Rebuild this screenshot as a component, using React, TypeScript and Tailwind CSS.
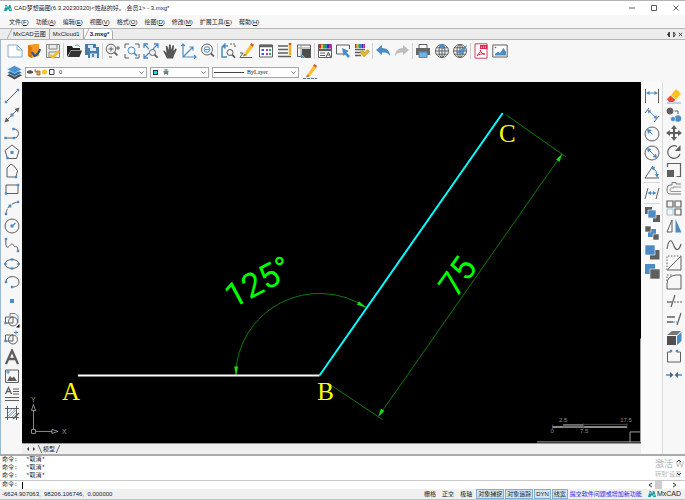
import type { ReactNode } from 'react';

type Tool = { name: string; art: ReactNode } | null;

const G = '#5f5f5f';
const B = '#4c8cc4';

const dot = (x: number, y: number, r = 1.2) => (
  <rect x={x - r} y={y - r} width={r * 2} height={r * 2} fill={B} stroke="none" />
);

const lens = (x: number, y: number, r: number) => (
  <>
    <circle cx={x} cy={y} r={r} />
    <path d={`M${x + r * 0.7} ${y + r * 0.7} l3 3`} strokeWidth="1.8" />
  </>
);

const pencil = (
  <>
    <path d="M5 11 L11 2 L14 4 L8 12 L4.500 13Z" fill="#fbc02d" stroke="none" />
    <path d="M11 2 L12.500 0 L15 1.800 L14 4Z" fill="#e4572e" stroke="none" />
    <path d="M5 11 L8 12 L4 13.500Z" fill="#8b6b3e" stroke="none" />
  </>
);

const rainbow = (x: number, y: number, w: number) => (
  <g stroke="none">
    {['#d22', '#e8c21a', '#2bab3b', '#28b', '#42b', '#c2a'].map((c, i) => (
      <rect key={c} x={x + (i * w) / 6} y={y} width={w / 6} height="4" fill={c} />
    ))}
  </g>
);

const globe = (
  <>
    <circle cx="8" cy="8" r="6.500" />
    <ellipse cx="8" cy="8" rx="3" ry="6.500" />
    <path d="M8 1.500 V14.500 M1.500 8 H14.500 M2.500 4.800 H13.500 M2.500 11.200 H13.500" />
  </>
);

const mainTools: Tool[] = [
  { name: '新建', art: <path d="M1 2 H10 L15 7 V14 H1Z M10 2 V7 H15" fill="#fff" stroke="#86aed2" /> },
  {
    name: '打开云图',
    art: (
      <>
        <path d="M2 2 L9 1 H13 V13 L5 15 L2 13Z" fill="#f49a20" stroke="none" />
        <path d="M2 2 L6 4 V15 L2 13Z" fill="#d97a0c" stroke="none" />
        <path d="M6 9 L8.500 13 C11 12 13 10 14 6" stroke="#28549a" strokeWidth="2.200" />
      </>
    ),
  },
  {
    name: '保存云图',
    art: (
      <>
        <path d="M1.500 1.500 H14.500 V14.500 H1.500Z" fill="#e9e9e9" stroke="#888" />
        <path d="M4 1.500 V6 H12 V1.500 M4 14 V9 H12" stroke="#888" />
        <path d="M5 12 L8 14 L14 8" stroke="#f3bd26" strokeWidth="2.600" />
      </>
    ),
  },
  null,
  {
    name: '打开',
    art: (
      <>
        <path d="M1 14 V3 H6 L7 5 H14 V7 H5 L1 14Z" fill="#222" stroke="none" />
        <path d="M2 14 L5 7.500 H16 L13.500 14Z" fill="#333" stroke="none" />
        <path d="M9 3 C11 1 13 2 13.500 4" stroke="#38a169" />
      </>
    ),
  },
  {
    name: '保存',
    art: (
      <>
        <path d="M1 1 H12 V4 H15 V15 H4 V12 H1Z" fill="#477cab" stroke="none" />
        <path d="M4 2 H9 V5 H4Z M6 5 H12 V8 H6Z M6 10.500 H13 V15 H6Z" fill="#dcebf7" stroke="none" />
        <path d="M9 11 V14" stroke="#315f8b" strokeWidth="1.500" />
      </>
    ),
  },
  null,
  {
    name: '实时缩放',
    art: (
      <>
        {lens(6, 6, 4.8)}
        <path d="M3.500 6 H8.500 M6 3.500 V8.500 M11 5 H15 M13 3 V7 M4 14 H7" stroke={G} />
      </>
    ),
  },
  {
    name: '窗口缩放',
    art: (
      <>
        <path d="M1 5 V1 H5 M11 1 H15 V5 M15 11 V15 H11 M5 15 H1 V11" />
        <g stroke={B}>{lens(7.5, 7.5, 3.5)}</g>
      </>
    ),
  },
  {
    name: '范围缩放',
    art: (
      <>
        <path d="M6 6 L1.500 1.500 M1 5 V1 H5 M10 6 L14.500 1.500 M11 1 H15 V5 M6 10 L1.500 14.500 M1 11 V15 H5" stroke={B} strokeWidth="1.300" />
        {lens(9.5, 9.5, 3)}
      </>
    ),
  },
  {
    name: '平移',
    art: (
      <path
        d="M4.500 14.500 L1.500 8.500 Q1 7 2.400 7.500 L4.500 10 L3.800 3.500 Q4.500 2 5.500 3.500 L6.500 7 L7 1.800 Q8 .5 8.800 1.800 L9 7 L10.500 2.500 Q11.700 1.500 12 3 L11.500 8 L13.500 5.500 Q15 5 14.500 7 L12 12.500 L11 15.500 H5Z"
        fill="#575757"
        stroke="none"
      />
    ),
  },
  { name: '坐标系', art: <path d="M2 1 V14 H15 M0 3 L2 1 L4 3 M13 12 L15 14 L13 16 M2 14 L12 4 M8.500 4 H12 V7.500" stroke={B} strokeWidth="1.200" /> },
  {
    name: '比例缩放',
    art: (
      <>
        {lens(7, 6.500, 5.5)}
        <circle cx="7" cy="6.500" r="2.800" stroke={B} />
        <path d="M5 6.500 H9" stroke={B} />
      </>
    ),
  },
  null,
  {
    name: '上一视图',
    art: (
      <>
        <path d="M8 3 H3.500 Q2 3 2 5 V14 H7 M5.500 0.500 L3 3 L5.500 5.500" stroke={B} strokeWidth="1.500" />
        <path d="M10 1 H15 V5" strokeDasharray="2 1" />
        {lens(10, 9.500, 3)}
      </>
    ),
  },
  {
    name: '画笔',
    art: (
      <>
        {pencil}
        <path d="M1 10 H4 L1 14.500 H13" />
      </>
    ),
  },
  {
    name: '特性',
    art: (
      <>
        <path d="M1.500 2 H14.500 V14 H1.500Z" fill="#fff" />
        <path d="M1.500 3 H14.500" strokeWidth="2.500" />
        <path d="M3.500 7 H6 M3.500 11 H6" stroke="#3c5bd2" strokeWidth="2" />
        <path d="M8 7 H10 M8 11 H10" stroke="#cc31c8" strokeWidth="2" />
        <path d="M11 7 H13 M11 11 H13" stroke="#28ad68" strokeWidth="2" />
      </>
    ),
  },
  {
    name: '线型',
    art: (
      <>
        <path d="M1 3 H11 M1 6.500 H11 M1 10 H11 M1 13.500 H14" strokeWidth="1.700" />
        <path d="M13 1 V12" stroke="#f5ad24" strokeWidth="2.500" />
        <path d="M13 0 V2" stroke="#d9482b" strokeWidth="2.500" />
      </>
    ),
  },
  {
    name: '图块',
    art: (
      <>
        <path d="M1.500 2 H14.500 V14.500 H9 M1.500 2 V13.500 H5" />
        <path d="M1.500 5 H14 M5 2 V14" stroke="#999" />
        <path d="M6 6 H14.500 V14.500 H9 L6 11.500Z" fill="#4d4d4d" stroke="none" />
        <path d="M5 15 V11 L9 15Z" fill={B} stroke="none" />
      </>
    ),
  },
  null,
  {
    name: '文字样式',
    art: (
      <>
        <path d="M1.500 1.500 H14.500 V14.500 H1.500Z" fill="#fff" />
        {rainbow(2, 1.500, 12)}
        <path d="M1 7 H15" strokeWidth="2.200" />
        <path d="M3 10 H8 M3 12.500 H8 M9 14 L11.500 9 L13.500 14 M10 12 H13" />
      </>
    ),
  },
  {
    name: '选择',
    art: (
      <>
        <path d="M8 11 H1.500 V2 H14.500 V6" />
        <path d="M7 5 L14 8 L11.500 9.500 L15 13 L13 15 L10 11.500 L8.500 13Z" fill={B} stroke="none" />
      </>
    ),
  },
  {
    name: '格式刷',
    art: (
      <>
        {rainbow(1, 1, 10)}
        <path d="M1 6.500 H11 M1 9.500 H7 M1 12.500 H7" strokeWidth="1.700" />
        <path d="M6 9 L10 14 L15.500 8.500 L13.500 6.500 L10.500 9.500 L8.500 7.500Z" fill="#e9b523" stroke="#b98d1c" strokeWidth=".5" />
      </>
    ),
  },
  null,
  { name: '撤销', art: <path d="M1 7 L7 2 V5 C12 5 15 8 15 13 C13 10 11 9 7 9.500 V12Z" fill="#4c8cc4" stroke="none" /> },
  { name: '重做', art: <path d="M15 7 L9 2 V5 C4 5 1 8 1 13 C3 10 5 9 9 9.500 V12Z" fill="#bdbdbd" stroke="none" /> },
  null,
  {
    name: '打印',
    art: (
      <>
        <path d="M4 5 V1.500 H12 V5" fill="#fff" />
        <path d="M1 5 H15 V12 H12 V9 H4 V12 H1Z" fill="#666" stroke="none" />
        <path d="M4 9 H12 V14.500 H4Z" fill="#79afda" stroke={B} />
      </>
    ),
  },
  { name: '网络', art: <>{globe}<path d="M5 2 Q8 0 11 3 L10 6 L6 5Z" fill={B} stroke="none" /></> },
  { name: '网络发布', art: <>{globe}<path d="M4 10 L15 2 L11 12 L8 10Z" fill={B} stroke="none" opacity=".9" /></> },
  null,
  {
    name: '导出PDF',
    art: (
      <>
        <path d="M2 .8 H14 V15.200 H2Z" fill="#fff" stroke="#d8405d" />
        <path d="M7 2 H14.500 V6 H7Z" fill="#d22b4e" stroke="none" />
        <path d="M8.500 3.500 V5 M10.500 3.500 V5 M12.500 3.500 V5" stroke="#fff" strokeWidth=".7" />
        <path d="M4 12.500 C6 11 7.500 9 7.500 7 C7.500 9 9 11.500 12 11 C9 10.500 6 11.500 4 12.500" stroke="#d22b4e" />
      </>
    ),
  },
  {
    name: '导出图片',
    art: (
      <>
        <path d="M.8 2 H15.200 V14 H.8Z" fill="#fff" />
        <path d="M3 12.500 V11 L6 8.500 L8 10 L11.500 5 L14 9 V12.500Z" fill={B} stroke="none" />
        <circle cx="3.500" cy="4.500" r=".8" fill={G} stroke="none" />
      </>
    ),
  },
];

const drawTools: Tool[] = [
  { name: '直线', art: <><path d="M2 14 L14 2" />{dot(2, 14)}{dot(14, 2)}</> },
  { name: '构造线', art: <><path d="M2 14 L14 2" /><path d="M0.500 15.500 L2 10.500 L5.500 14Z M15.500 .5 L10.500 2 L14 5.500Z" fill={G} stroke="none" />{dot(8, 8, 1.5)}</> },
  { name: '多段线', art: <><path d="M1 13 H10 A4.500 4.500 0 0 0 10 4" />{dot(1.500, 13)}{dot(9.500, 4)}{dot(10, 13)}</> },
  { name: '多边形', art: <><path d="M8 1 L15 6.500 L12.500 14.500 H3.500 L1 6.500Z" />{dot(8, 8.500, 1.5)}{dot(3.500, 14)}</> },
  { name: '闭合线', art: <><path d="M3 14 V5 L7 1 L11 4 L13.500 8 L12 14Z" />{dot(12, 14)}</> },
  { name: '矩形', art: <><path d="M2 4 H14 V12.500 H2Z" />{dot(14, 4)}{dot(2, 12.500)}</> },
  { name: '圆弧', art: <><path d="M2 14 Q3 4 14 2" strokeDasharray="5 1" />{dot(2, 14)}{dot(6, 6, 1.4)}{dot(14, 2)}</> },
  { name: '圆', art: <><circle cx="8" cy="8" r="7" /><path d="M8 8 L11.500 5" stroke={B} strokeWidth="1.300" />{dot(8, 8, 1.5)}</> },
  { name: '样条曲线', art: <><path d="M2 2 C1 12 4 11 6 8.500 C8 6 9 7 10 9 C11 10.500 14 8 14 14" />{dot(2, 2)}{dot(14, 14)}</> },
  { name: '椭圆', art: <><ellipse cx="8" cy="8" rx="7" ry="4.500" />{dot(1.500, 8)}{dot(14.500, 8)}{dot(8, 3.500)}{dot(8, 12.500)}</> },
  { name: '椭圆弧', art: <><path d="M2 7 C4 0 15 2 15 8 C15 12 11 13 8 13" />{dot(2, 8)}{dot(8, 13)}</> },
  { name: '点', art: dot(8, 8, 2) },
  { name: '插入块', art: <><path d="M6 4 V1.500 H11 L14 4.500 V11" stroke={B} /><path d="M1.500 5 H9 V11 H1.500Z" /><circle cx="9" cy="9.500" r="4.500" /><path d="M15.500 12 V15.500 H12Z" fill="#000" stroke="none" />{dot(1.500, 11)}</> },
  { name: '创建块', art: <><path d="M1.500 5 H9 V11 H1.500Z" /><circle cx="9" cy="9.500" r="4.500" /><path d="M10 2.500 H14 M12 .5 V4.500" stroke={B} />{dot(1.500, 11)}</> },
  { name: '文字', art: <path d="M2 15 L8 1.500 L14 15 M4.500 10 H11.500" strokeWidth="2.300" /> },
  { name: '图片', art: <><path d="M1.500 2 H14.500 V14.500 H1.500Z" /><path d="M3 13 L6 8 L8 10 L10 8.500 L13 13Z" fill={G} stroke="none" /><path d="M2 4 H6 M4 2 V6" stroke={B} /></> },
  { name: '多行文字', art: <><path d="M1.500 8 L4.500 1.500 L7.500 8 M2.700 5.500 H6.300" strokeWidth="1.300" /><path d="M9 3 H15 M9 5.500 H15 M9 8 H15 M1 11.500 H15 M1 14.500 H15" /></> },
  { name: '填充', art: <><path d="M3.500 1 V15 M12.500 1 V15 M1 3.500 H15 M1 12.500 H15" /><path d="M4 8 L8 4 M4 11 L11 4 M5 12 L12 5 M8 12 L12 8" stroke={B} strokeWidth=".7" /><path d="M15 8 L9 14" strokeWidth="1.500" /></> },
];

const dimTools: Tool[] = [
  { name: '线性标注', art: <><path d="M1.500 1 V15 M14.500 1 V15" /><path d="M4 5 H12" stroke={B} /><path d="M2 5 L5.500 3 V7Z M14 5 L10.500 3 V7Z" fill={B} stroke="none" /></> },
  { name: '对齐标注', art: <><path d="M1 6 L5 1 M10 15 L15 9" /><path d="M5 4 L12 11" stroke={B} /><path d="M3.500 3 L7.500 3.500 L4.500 6.500Z M13 12 L12.500 8 L9.500 11Z" fill={B} stroke="none" /></> },
  { name: '半径标注', art: <><circle cx="8" cy="8" r="7" /><path d="M8.500 8.500 L5 5" stroke={B} /><path d="M3 3 L8 4 L4 8Z" fill={B} stroke="none" /></> },
  { name: '直径标注', art: <><circle cx="8" cy="8" r="7" /><path d="M5 5 L11 11" stroke={B} /><path d="M3 3 L7.500 4 L4 7.500Z M13 13 L12 8.500 L8.500 12Z" fill={B} stroke="none" /></> },
  { name: '角度标注', art: <><path d="M15 14 H1 L9 2" /><path d="M9 4 Q13 6 13 12" stroke={B} /><path d="M6.500 4 L11 2.500 L10 6.500Z M13 14 L11 10 H15Z" fill={B} stroke="none" /></> },
  null,
  { name: '连续标注', art: <><path d="M1 14 L4 3 M12 14 L15 3" /><path d="M5 8 H11" stroke={B} /><path d="M3.500 8 L7 6 V10Z M12.500 8 L9 6 V10Z" fill={B} stroke="none" /></> },
  null,
  { name: '前置', art: <g stroke="none"><path d="M1 1 H8 V8 H1Z M9 9 H16 V16 H9Z" fill={G} /><path d="M4 4 H12 V12 H4Z" fill={B} stroke="#fff" strokeWidth=".6" /></g> },
  { name: '后置', art: <g stroke="none"><path d="M4 4 H12 V12 H4Z" fill={B} /><path d="M1 1 H7 V7 H1Z M9 9 H15 V15 H9Z" fill={G} stroke="#fff" strokeWidth=".6" /></g> },
  { name: '置于对象之上', art: <><path d="M6 6 H15.500 V15.500 H6Z" fill={G} stroke="none" /><path d="M1 1 H11 V11 H1Z" fill={B} stroke="#fff" strokeWidth=".6" /></> },
  { name: '置于对象之下', art: <><path d="M1 1 H11 V11 H1Z" fill={B} stroke="none" /><path d="M6 6 H16 V16 H6Z" fill={G} stroke="#fff" strokeWidth=".6" /></> },
];

const editTools: Tool[] = [
  { name: '删除', art: <><path d="M5 7 L10 1 L15 5.500 L10 11.500Z" fill="#fcc419" stroke="none" /><path d="M1 11 L4.500 7.500 L9.500 12 L7 14 H3Z" fill="#e8502a" stroke="none" /><path d="M1 15 H15" stroke={B} strokeWidth=".7" /></> },
  { name: '复制', art: <><circle cx="4" cy="4" r="3" fill={G} /><path d="M8.500 4 H12 V7" /><circle cx="12" cy="11.500" r="3.200" fill={B} stroke="none" /><circle cx="7" cy="12" r="2.500" fill={B} stroke="#fff" strokeWidth=".6" /></> },
  { name: '移动', art: <><path d="M8 2 V14 M2 8 H14" strokeWidth="2" /><path d="M8 0 L11 4 H5Z M8 16 L11 12 H5Z M0 8 L4 5 V11Z M16 8 L12 5 V11Z" fill={G} stroke="none" /></> },
  { name: '旋转', art: <><path d="M11 2.500 A6.300 6.300 0 1 0 14 10" strokeWidth="1.200" /><path d="M14.500 1 V7 H9Z" fill={G} stroke="none" /></> },
  { name: '缩放', art: <><path d="M1 8 H8 V15 H1Z" fill={G} stroke="none" /><path d="M1.500 5 V1.500 H14.500 V14.500 H10.500" strokeWidth="1.200" /></> },
  { name: '偏移', art: <><path d="M15 3 H10 V1.500 H6 V4 H4 Q1 4 1 8 Q1 13 4 13 H15" stroke="#777" /><path d="M15 6 H9 V5 M8 5 V7 H5 Q4 7 4 9 Q4 10.500 5 10.500 H15" stroke="#999" /></> },
  { name: '阵列', art: <><path d="M1 1 H7 V7 H1Z M9 1 H15 V7 H9Z M9 9 H15 V15 H9Z" strokeWidth="1.200" /><path d="M1 9 H7 V15 H1Z" stroke="#9dbdd8" /></> },
  { name: '镜像', art: <><path d="M6 2 V14 H1Z" /><path d="M9.500 1 V14.500 H15.500Z" fill={B} stroke="none" /></> },
  { name: '曲线编辑', art: <path d="M1 12 C3 0 6 3 8 9 C10 14 13 14 15 7" strokeWidth="1.200" /> },
  { name: '倒角', art: <><path d="M1 15 H15 V1" /><path d="M1 15 V1 H15" strokeDasharray="1.500 1.500" /><path d="M1.500 14.500 L14.500 1.500" /></> },
  { name: '圆角', art: <><path d="M1 10 V15 H15 V1 H10 Q1 2 1 10" /><path d="M1 7 V1 H7" strokeDasharray="1.500 1.500" /></> },
  { name: '修剪', art: <><path d="M1 9 H6" strokeWidth="1.300" /><path d="M8 9 H16" strokeDasharray="2 1" /><path d="M9 2 L5 14" strokeWidth="1.200" /></> },
  { name: '延伸', art: <><path d="M1 6 H9 M1 11 H7" strokeWidth="1.300" /><path d="M7 11 H11" stroke={B} strokeDasharray="2 1" /><path d="M15 2 L11 14" strokeWidth="1.200" /></> },
  { name: '拉伸', art: <g stroke="none"><path d="M1 6 H10 V15 H1Z" fill="#505050" /><path d="M1 5 L6 1 H15 L11 5Z" fill="#777" /><path d="M11 6 L15.500 2 V11 L11 15Z" fill={B} /></g> },
  { name: '打断', art: <><path d="M5 4 H1.500 V14 H14.500 V4 H11" />{dot(5, 3)}{dot(11, 3)}</> },
  { name: '合并', art: <><path d="M0 8 H5 M16 8 H11" stroke={B} strokeWidth="1.300" /><path d="M7.500 8 L4 5 V11Z M8.500 8 L12 5 V11Z" fill="#426a8d" stroke="none" /></> },
];

const menus = [
  ['文件', 'F'],
  ['功能', 'A'],
  ['编辑', 'E'],
  ['视图', 'V'],
  ['格式', 'O'],
  ['绘图', 'D'],
  ['修改', 'M'],
  ['扩展工具', 'E'],
  ['帮助', 'H'],
];

function ToolButtons({ tools, vertical }: { tools: Tool[]; vertical?: boolean }) {
  return (
    <>
      {tools.map((tool, i) =>
        tool ? (
          <button key={i} type="button" aria-label={tool.name} title={tool.name} className="size-4 shrink-0 hover:bg-sky-100">
            <svg viewBox="0 0 16 16" className="size-4" fill="none" stroke={G} strokeWidth="1">
              {tool.art}
            </svg>
          </button>
        ) : (
          <span key={i} className={vertical ? '-my-px h-px w-4 bg-[#d8d8d8]' : '-mx-px h-4 w-px bg-[#d0d0d0]'} />
        )
      )}
    </>
  );
}

function Combo({ label, value, width, children }: { label: string; value: string; width: string; children: ReactNode }) {
  return (
    <div className={`flex h-[11px] items-center border border-[#a8a8a8] bg-white font-['Liberation_Serif','Noto_Sans_CJK_SC',serif] ${width}`}>
      {children}
      <select aria-label={label} className="min-w-0 flex-1 appearance-none bg-transparent text-[6px] leading-[8px] outline-none">
        <option>{value}</option>
      </select>
      <svg viewBox="0 0 7 7" className="pointer-events-none mr-px size-[7px] shrink-0" fill="none" stroke="#555">
        <path d="M1.500 2.500 L3.500 4.500 L5.500 2.500" strokeWidth=".8" />
      </svg>
    </div>
  );
}

function Logo() {
  return (
    <svg viewBox="0 0 8 8" className="size-2 shrink-0">
      <path d="M0 7 L1.500 1 H3 L4 4 L5 1 H6.500 L8 7 H5.500 L4 5 L2.500 7Z" fill="#159c9c" />
      <path d="M1 3 H3 M5 5 H7" stroke="#fff" strokeWidth=".7" />
    </svg>
  );
}

function Drawing() {
  return (
    <svg viewBox="22 82 620 361" preserveAspectRatio="xMinYMin meet" className="block h-full w-full" role="img" aria-label="图纸">
      <g stroke="#0a9a0a" strokeWidth=".8" fill="none">
        <path d="M236 376 A84 83 0 0 1 367 308" />
        <path d="M507 115 L567 157 M329 384 L383 420 M563 154 L379 417" />
      </g>
      <g fill="#18e018">
        <path d="M236.500 376 L234.500 367 H238.500Z" />
        <path d="M367 308 L357.500 305 L359.500 301.500Z" />
        <path d="M563 154 L560.500 162 L557 159.500Z" />
        <path d="M379 417 L381.500 409 L385 411.500Z" />
      </g>
      <path d="M78 376 H320" stroke="#fff" strokeWidth="2" />
      <path d="M320 376 L503.500 113" stroke="#00ffff" strokeWidth="2" />
      <g fill="#00ff00" fontFamily="Roboto, sans-serif" fontSize="34">
        <text transform="translate(233 309) rotate(-28)">125°</text>
        <text transform="translate(457 299) rotate(-55)">75</text>
      </g>
      <g fill="#ffff00" fontFamily="'Liberation Serif', serif" fontSize="25" textAnchor="middle">
        <text x="71" y="401">A</text>
        <text x="326" y="401">B</text>
        <text x="508" y="142">C</text>
      </g>
      <g stroke="#b0b0b0" strokeWidth=".8" fill="none">
        <path d="M31.500 430 H35.500 V434 H31.500Z M33.500 430 V411 M35.500 432 H52" />
        <path d="M33.500 405 L35.500 411 H31.500Z M58 432 L52 430 V434Z" />
      </g>
      <g fill="#9a9a9a" fontFamily="'Liberation Sans', sans-serif" fontSize="7">
        <text x="31" y="403">Y</text>
        <text x="62" y="435">X</text>
      </g>
      <path d="M553 427.500 H628" stroke="#8a8a8a" strokeWidth="2" />
      <path d="M564 425.500 H584" stroke="#c8c8c8" />
      <path d="M553.500 425 V430 M564 427.500 H584 M584.500 424 V429 M628 424 V429 M584 425 H628" stroke="#555" strokeWidth=".8" />
      <g fill="#8c8c8c" fontFamily="'Liberation Sans', sans-serif" fontSize="6" textAnchor="middle">
        <text x="564" y="423">2.5</text>
        <text x="627" y="423">17.5</text>
        <text x="553" y="434">0</text>
        <text x="585" y="434">7.5</text>
      </g>
      <path d="M538 442.500 H642 M641.500 339 V443 M631 443 V432.500 H641" stroke="#a0a0a0" fill="none" />
    </svg>
  );
}

export default function App() {
  return (
    <div className="flex h-screen flex-col overflow-hidden border-t border-[#b5b5b5] bg-[#f7f7f7] font-['Liberation_Sans','Noto_Sans_CJK_SC',sans-serif] text-[6px] leading-[8px] text-[#222]">
      <header className="flex h-[14px] shrink-0 items-center bg-white pl-1">
        <Logo />
        <h1 className="flex-1 pl-0.5 whitespace-pre">CAD梦想画图(6.3.20230320)&lt;姓赵的好。,会员1&gt; - 3.mxg*</h1>
        <div className="flex gap-[14px] pr-[5px]">
          {['M1 4 H7', 'M1.500 1.500 H6.500 V6.500 H1.500Z', 'M1.500 1.500 L6.500 6.500 M6.500 1.500 L1.500 6.500'].map((d, i) => (
            <button key={d} type="button" aria-label={['最小化', '最大化', '关闭'][i]} className="size-2">
              <svg viewBox="0 0 8 8" className="size-2" fill="none" stroke="#333" strokeWidth=".8">
                <path d={d} />
              </svg>
            </button>
          ))}
        </div>
      </header>

      <nav className="flex h-[13px] shrink-0 items-center gap-[7px] pl-[9px]">
        {menus.map(([name, key]) => (
          <button key={name} type="button" className="whitespace-nowrap">
            {name}(<span className="underline">{key}</span>)
          </button>
        ))}
      </nav>

      <div className="flex h-[12px] shrink-0 items-end border-y border-[#b4b4b4] bg-[#ececec] pl-[7px]">
        <div role="tablist" className="flex flex-1 items-end">
          {['MxCAD云图', 'MxCloud1', '3.mxg*'].map((tab, i) => (
            <button
              key={tab}
              type="button"
              role="tab"
              aria-selected={i === 2}
              className={`flex h-[10px] items-center border-r border-[#aaa] pr-[3px] ${i === 2 ? 'rounded-tr-sm bg-white font-bold' : ''}`}
            >
              <svg viewBox="0 0 6 10" className={i === 1 ? 'h-[10px] w-[3px]' : 'h-[10px] w-[6px]'} fill="none" stroke="#aaa">
                {i !== 1 && <path d="M0 10 L5 0" />}
              </svg>
              {tab}
            </button>
          ))}
        </div>
        <div className="flex items-center gap-px pr-0.5">
          {['M4 1 L2 4 L4 7Z', 'M2 1 L4 4 L2 7Z', 'M1 2 L5 6 M5 2 L1 6'].map((d, i) => (
            <button key={d} type="button" aria-label={['上一个', '下一个', '关闭标签'][i]} className="h-[9px] w-[5px]">
              <svg viewBox="0 0 6 8" className="h-[9px] w-[5px]" fill={i ? 'none' : '#222'} stroke="#222">
                <path d={d} />
              </svg>
            </button>
          ))}
        </div>
      </div>

      <div className="flex h-[22px] shrink-0 items-center border-l border-[#9cb8d0] pl-[6px]">
        <div className="flex w-full max-w-[501px] items-center justify-between">
          <ToolButtons tools={mainTools} />
        </div>
      </div>

      <div className="flex h-[20px] shrink-0 items-center gap-[3px] border-l border-[#9cb8d0] pl-[6px]">
        <button type="button" aria-label="图层" className="size-[15px]">
          <svg viewBox="0 0 16 16" className="size-[15px]">
            <path d="M0 11 L8 7 L16 11 L8 15.500Z" fill="#4a4a4a" />
            <path d="M0 8 L8 4 L16 8 L8 12.500Z" fill="#2c6da3" stroke="#fff" strokeWidth=".5" />
            <path d="M0 4.500 L8 .5 L16 4.500 L8 9Z" fill="#4c94cf" stroke="#fff" strokeWidth=".5" />
          </svg>
        </button>
        <Combo label="当前图层" value="0" width="w-[122px]">
          <svg viewBox="0 0 29 8" className="mr-1 h-2 w-[29px] shrink-0">
            <path d="M1 3.500 Q4 1 7 3.500 V5 Q4 6.500 1 5Z" fill="#555" />
            <path d="M9 1 V4 H11 M11 3 H14 V7 H11Z" fill="#e9a53a" stroke="#a65b2a" strokeWidth=".8" />
            <circle cx="18.500" cy="4" r="2.500" fill="#ffc51b" />
            <path d="M23.500 1.500 H28 V6.500 H23.500Z" fill="#fff" stroke="#444" />
          </svg>
        </Combo>
        <Combo label="颜色" value="青" width="w-[59px]">
          <span className="mr-[5px] ml-0.5 size-[5px] shrink-0 border border-[#333] bg-[#00e5e5]" />
        </Combo>
        <Combo label="线型" value="ByLayer" width="w-[87px]">
          <span className="mr-[3px] ml-px h-px w-[30px] shrink-0 bg-[#444]" />
        </Combo>
        <button type="button" aria-label="编辑线型" className="size-4">
          <svg viewBox="0 0 16 16" className="size-4">
            {pencil}
            <path d="M1 14.500 H15" stroke="#54709c" strokeDasharray="3 1" />
          </svg>
        </button>
      </div>

      <main className="flex min-h-0 flex-1">
        <aside className="flex w-[22px] shrink-0 flex-col items-center justify-between border-l border-[#9cb8d0] pt-[6px] pb-[33px]">
          <ToolButtons tools={drawTools} vertical />
        </aside>
        <section className="flex min-w-0 flex-1 flex-col">
          <div className="min-h-0 flex-1 bg-black">
            <Drawing />
          </div>
          <div className="flex h-[11px] shrink-0 items-center border-t border-[#999] bg-[#efefef] pl-[3px]">
            <button type="button" aria-label="上一布局" className="w-[6px]">
              <svg viewBox="0 0 6 8" className="h-2 w-[6px]"><path d="M4 2 L2 4 L4 6Z" fill="#333" /></svg>
            </button>
            <button type="button" aria-label="下一布局" className="w-[6px]">
              <svg viewBox="0 0 6 8" className="h-2 w-[6px]"><path d="M2 2 L4 4 L2 6Z" fill="#333" /></svg>
            </button>
            <button type="button" className="flex items-center">
              <svg viewBox="0 0 6 10" className="h-[9px] w-[6px]"><path d="M1 0 L5 9" stroke="#333" strokeWidth=".8" /></svg>
              模型
              <svg viewBox="0 0 6 10" className="h-[9px] w-[6px]"><path d="M5 0 L1 9" stroke="#333" strokeWidth=".8" /></svg>
            </button>
          </div>
        </section>
        <aside className="flex w-[22px] shrink-0 flex-col items-center border-r border-[#dcdcdc] bg-[#fafafa] pt-[6px]">
          <div className="flex flex-col items-center gap-[3px]">
            <ToolButtons tools={dimTools} vertical />
          </div>
        </aside>
        <aside className="flex w-[22px] shrink-0 flex-col items-center justify-between pt-[6px] pb-[71px]">
          <ToolButtons tools={editTools} vertical />
        </aside>
      </main>

      <section className="relative shrink-0 border-t-2 border-[#ababab] bg-white font-['Liberation_Mono','Noto_Sans_CJK_SC',monospace]">
        <div className="border-b border-[#c8c8c8] pl-0.5">
          {[0, 1, 2].map((n) => (
            <p key={n} className="flex gap-2">
              <span className="w-4">命令:</span>
              <span>*取消*</span>
            </p>
          ))}
        </div>
        <div className="flex h-2 items-center pr-2 pl-0.5">
          <label htmlFor="command" className="w-5">命令:</label>
          <input id="command" type="text" className="h-[7px] min-w-0 flex-1 border-l border-black outline-none" />
          <svg viewBox="0 0 32 8" className="h-2 w-8">
            <path d="M7 2 L4 4 L7 6 M28 2 L31 4 L28 6" fill="none" stroke="#333" />
            <path d="M10 0 H17 V8 H10Z" fill="#cdcdcd" />
          </svg>
        </div>
        <div className="pointer-events-none absolute top-[3px] right-0 w-[30px] whitespace-nowrap font-['Liberation_Sans','Noto_Sans_CJK_SC',sans-serif] text-[#b4b4b4]">
          <p className="text-[9px] leading-[11px]">激活 W</p>
          <p>转到“设置</p>
        </div>
        <svg viewBox="0 0 8 22" className="absolute top-0 right-[2px] h-[22px] w-2" fill="none" stroke="#333">
          <path d="M2 6 L4 4 L6 6 M2 17 L4 19 L6 17" />
        </svg>
      </section>

      <footer className="flex h-[11px] shrink-0 items-center border-b border-[#b8c4cc] bg-[#f0f0f0] pr-1 pl-0.5 whitespace-nowrap">
        <p className="flex-1 whitespace-pre">-6624.907063,  98206.106746,  0.000000</p>
        <div className="flex items-center gap-[6px]">
          {['栅格', '正交', '极轴'].map((mode) => (
            <button key={mode} type="button" aria-pressed={false}>{mode}</button>
          ))}
        </div>
        <div className="flex items-center gap-px pl-1">
          {['对象捕捉', '对象追踪', 'DYN', '线宽'].map((mode) => (
            <button key={mode} type="button" aria-pressed={true} className="border border-[#7faed2] bg-[#cfe4f5] px-px">
              {mode}
            </button>
          ))}
        </div>
        <a href="#feedback" className="pr-[6px] pl-0.5 text-[#2222ee]">提交软件问题或增加新功能</a>
        <Logo />
        <span className="pl-px text-[7px]">MxCAD</span>
      </footer>
    </div>
  );
}
